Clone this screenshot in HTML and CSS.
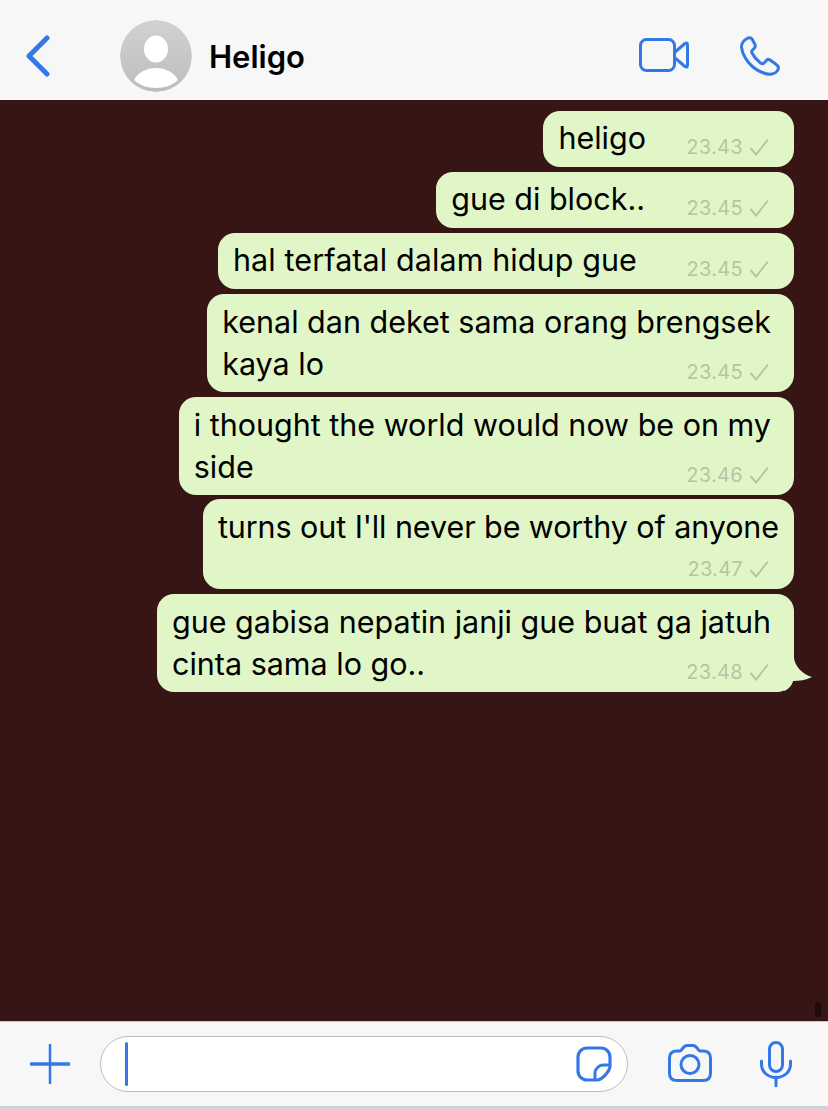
FILE: index.html
```html
<!DOCTYPE html>
<html lang="id">
<head>
<meta charset="utf-8">
<title>Heligo</title>
<link rel="stylesheet" href="styles.css">
</head>
<body>
<div class="app">
  <header class="topbar">
    <svg class="back" viewBox="0 0 25 42" width="25" height="42"><path d="M22 3 L4 21 L22 39" fill="none" stroke="#3478e8" stroke-width="5" stroke-linecap="round" stroke-linejoin="round"/></svg>
    <div class="avatar">
      <svg viewBox="0 0 72 72" width="72" height="72"><defs><linearGradient id="av" x1="0" y1="0" x2="0" y2="1"><stop offset="0" stop-color="#d2d2d2"/><stop offset="1" stop-color="#bcbcbc"/></linearGradient></defs><circle cx="36" cy="36" r="36" fill="url(#av)"/><ellipse cx="36" cy="29" rx="12" ry="13.500" fill="#fff"/><path d="M14 60 C18 52 27 48 36 48 C45 48 54 52 58 60 C53 65 45 68 36 68 C27 68 19 65 14 60 Z" fill="#fff"/></svg>
    </div>
    <div class="name">Heligo</div>
    <svg class="video" viewBox="0 0 50 34" width="50" height="34"><rect x="1.500" y="1.500" width="34" height="31" rx="6" fill="none" stroke="#3478e8" stroke-width="3"/><path d="M36 14 L46 5.500 Q48.500 4 48.500 7 L48.500 27 Q48.500 30 46 28.500 L36 20" fill="none" stroke="#3478e8" stroke-width="3" stroke-linejoin="round"/></svg>
    <svg class="phone" viewBox="0 0 40 40" width="40" height="40"><path d="M8 2 C4 4 1.500 7 1.500 11 C2 18 7 26 13 31 C19 36 27 39 32 38 C35 37.500 38 35 38.500 32 C38.500 30 37 29 35 27.500 L30 24 C28.500 23 27 23.500 26 25 L24 27 C23 28 22 28 20.500 27 C16.500 24 14 21 12 17 C11.500 16 11.500 15 12.500 14 L14.500 12 C15.500 11 15.500 10 15 8.500 L12 3 C11 1.500 9.500 1.500 8 2 Z" fill="none" stroke="#3478e8" stroke-width="3" stroke-linejoin="round"/></svg>
  </header>

  <main class="chat">
    <div class="bubble s1"><div class="text">heligo</div><div class="meta"><span>23.43</span><svg viewBox="0 0 20 18" width="20" height="18"><path d="M1.500 10 L7 16.500 L19 1.500" fill="none" stroke="#b3c6a3" stroke-width="2"/></svg></div></div>
    <div class="bubble s2"><div class="text">gue di block..</div><div class="meta"><span>23.45</span><svg viewBox="0 0 20 18" width="20" height="18"><path d="M1.500 10 L7 16.500 L19 1.500" fill="none" stroke="#b3c6a3" stroke-width="2"/></svg></div></div>
    <div class="bubble s3"><div class="text">hal terfatal dalam hidup gue</div><div class="meta"><span>23.45</span><svg viewBox="0 0 20 18" width="20" height="18"><path d="M1.500 10 L7 16.500 L19 1.500" fill="none" stroke="#b3c6a3" stroke-width="2"/></svg></div></div>
    <div class="bubble wrapped"><div class="text">kenal dan deket sama orang brengsek<br>kaya lo</div><div class="meta"><span>23.45</span><svg viewBox="0 0 20 18" width="20" height="18"><path d="M1.500 10 L7 16.500 L19 1.500" fill="none" stroke="#b3c6a3" stroke-width="2"/></svg></div></div>
    <div class="bubble wrapped"><div class="text">i thought the world would now be on my<br>side</div><div class="meta"><span>23.46</span><svg viewBox="0 0 20 18" width="20" height="18"><path d="M1.500 10 L7 16.500 L19 1.500" fill="none" stroke="#b3c6a3" stroke-width="2"/></svg></div></div>
    <div class="bubble below"><div class="text">turns out I'll never be worthy of anyone</div><div class="meta"><span>23.47</span><svg viewBox="0 0 20 18" width="20" height="18"><path d="M1.500 10 L7 16.500 L19 1.500" fill="none" stroke="#b3c6a3" stroke-width="2"/></svg></div></div>
    <div class="bubble wrapped last"><div class="text">gue gabisa nepatin janji gue buat ga jatuh<br>cinta sama lo go..</div><div class="meta"><span>23.48</span><svg viewBox="0 0 20 18" width="20" height="18"><path d="M1.500 10 L7 16.500 L19 1.500" fill="none" stroke="#b3c6a3" stroke-width="2"/></svg></div>
      <svg class="tail" viewBox="0 0 24 34" width="24" height="34"><path d="M-1 0 H0 C1 8 8 16 18 19 C12 22 5 23 -1 23 C-2 27 -5 31 -10 33 L-10 0 Z" fill="#e1f6c7"/></svg>
    </div>
    <div class="scroll-dot"></div>
  </main>

  <footer class="composer">
    <svg class="plus" viewBox="0 0 40 40" width="40" height="40"><path d="M20 1 V39" stroke="#3478e8" stroke-width="2.500" stroke-linecap="round"/><path d="M1 20 H39" stroke="#3478e8" stroke-width="3.500" stroke-linecap="round"/></svg>
    <div class="input">
      <div class="caret"></div>
      <svg class="sticker" viewBox="0 0 36 36" width="36" height="36"><path d="M11 2 H25 C30 2 34 6 34 11 V20 C34 25 26 34 21 34 H11 C6 34 2 30 2 25 V11 C2 6 6 2 11 2 Z" fill="none" stroke="#3478e8" stroke-width="3.200"/><path d="M34 19 H27 C23 19 19 23 19 27 V34" fill="none" stroke="#3478e8" stroke-width="3"/></svg>
    </div>
    <svg class="camera" viewBox="0 0 44 38" width="44" height="38"><path d="M9 7 H12 C14 7 15 1.500 19 1.500 H25 C29 1.500 30 7 32 7 H35 Q42.500 7 42.500 14 V29 Q42.500 36.500 35 36.500 H9 Q1.500 36.500 1.500 29 V14 Q1.500 7 9 7 Z" fill="none" stroke="#3478e8" stroke-width="3" stroke-linejoin="round"/><circle cx="22" cy="20.500" r="9" fill="none" stroke="#3478e8" stroke-width="3"/></svg>
    <svg class="mic" viewBox="0 0 32 46" width="32" height="46"><rect x="9.500" y="1.500" width="13" height="29" rx="6.500" fill="none" stroke="#3478e8" stroke-width="3"/><path d="M1.500 20 V23 C1.500 31 8 36.500 16 36.500 C24 36.500 30.500 31 30.500 23 V20" fill="none" stroke="#3478e8" stroke-width="3" stroke-linecap="round"/><path d="M16 36 V45" stroke="#3478e8" stroke-width="3" stroke-linecap="round"/></svg>
  </footer>
  <div class="strip"></div>
</div>
</body>
</html>
```
FILE: styles.css
```css
* { box-sizing: border-box; }
html, body { margin: 0; padding: 0; }
body { font-family: Inter, "Liberation Sans", sans-serif; background: #f7f7f7; }
.app { width: 828px; height: 1109px; display: flex; flex-direction: column; overflow: hidden; }

.topbar { height: 100px; flex: none; background: #f7f7f7; display: flex; align-items: center; padding: 0 48px 0 25px; }
.topbar svg { display: block; flex: none; }
.back { margin: 12px 0 0 0; }
.avatar { margin: 12px 0 0 70px; width: 72px; height: 72px; border-radius: 50%; overflow: hidden; flex: none; }
.name { margin: 12px auto 0 17px; font-size: 31px; font-weight: 600; color: #000; }
.video { margin: 10px 0 0 0; }
.phone { margin: 12px 0 0 51px; }

.chat { position: relative; flex: 1; background: #371515; display: flex; flex-direction: column; align-items: flex-end; gap: 5px; padding: 11px 34px 0 0; }
.bubble { position: relative; display: flex; flex-direction: column; background: #e1f6c7; border-radius: 17px; padding: 6px 15px 10px 15px; color: #000; }
.text { font-size: 30.500px; line-height: 42px; white-space: nowrap; }
.meta { display: flex; align-items: center; justify-content: flex-end; gap: 6px; height: 20px; margin: -22px 10px 0 0; color: #b3c6a3; font-size: 20px; letter-spacing: 0.3px; }
.meta svg { display: block; flex: none; }
.s1 .text { padding-right: 133px; }
.s2 .text { padding-right: 134px; }
.s3 .text { padding-right: 142px; letter-spacing: 0.1px; }
.wrapped .text, .below .text { margin: 1px 0 -1px; }
.wrapped .text { padding-right: 8px; }
.below { margin-top: -1px; }
.below .text { letter-spacing: -0.08px; }
.below .meta { margin-top: 12px; }
.tail { position: absolute; left: 100%; top: 64px; overflow: visible; }
.scroll-dot { position: absolute; right: 7px; bottom: 4px; width: 6px; height: 15px; border-radius: 3px; background: #1e0b0b; }

.composer { height: 85px; flex: none; background: #f7f7f7; display: flex; align-items: flex-start; padding: 14px 36px 0 30px; border-top: 1px solid #cfc7c5; }
.composer > svg { display: block; flex: none; }
.plus { margin-top: 8px; }
.input { width: 528px; height: 56px; margin-left: 30px; display: flex; align-items: center; justify-content: space-between; background: #fff; border: 1.500px solid #bdbdbd; border-radius: 28px; padding: 0 15px 0 24px; }
.caret { width: 3px; height: 44px; border-radius: 2px; background: #3478e8; }
.sticker { display: block; }
.camera { margin: 8px 0 0 40px; }
.mic { margin: 5px 0 0 48px; }
.strip { height: 3px; flex: none; background: #d0d0d6; }
```
